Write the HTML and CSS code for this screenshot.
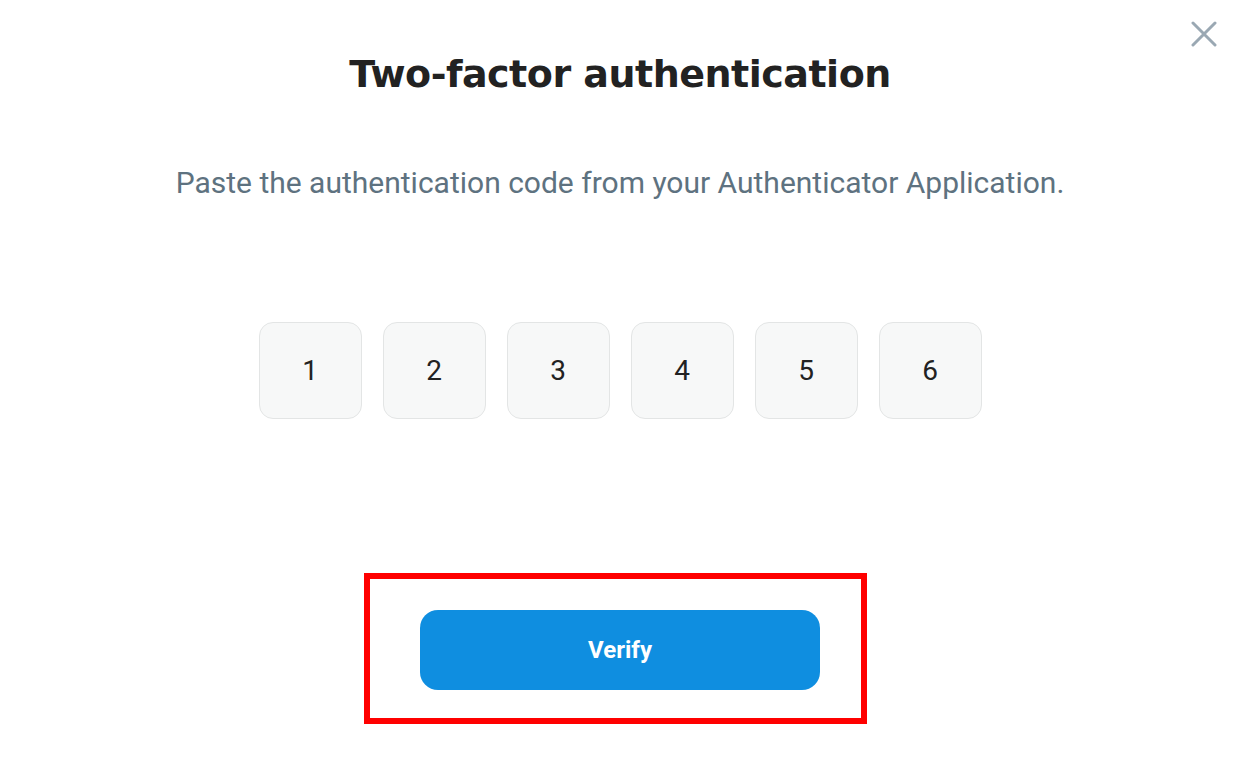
FILE: index.html
```html
<!DOCTYPE html>
<html lang="en">
<head>
<meta charset="utf-8">
<title>Two-factor authentication</title>
<link rel="stylesheet" href="styles.css">
</head>
<body>
<div class="modal">
  <button class="close" aria-label="Close">
    <svg width="26" height="26" viewBox="0 0 26 26"><path d="M2 2 L24 24 M24 2 L2 24" stroke="#9aa8b3" stroke-width="3" stroke-linecap="round" fill="none"/></svg>
  </button>
  <h1 class="title">Two-factor authentication</h1>
  <p class="subtitle">Paste the authentication code from your Authenticator Application.</p>
  <div class="code">
    <div class="digit">1</div>
    <div class="digit">2</div>
    <div class="digit">3</div>
    <div class="digit">4</div>
    <div class="digit">5</div>
    <div class="digit">6</div>
  </div>
  <div class="actions">
    <button class="verify">Verify</button>
    <div class="highlight"></div>
  </div>
</div>
</body>
</html>
```

FILE: styles.css
```css
html, body {
  margin: 0;
  padding: 0;
  background: #ffffff;
}
.modal {
  position: relative;
  width: 1236px;
  height: 764px;
  box-sizing: border-box;
  padding-left: 4px;
  display: flex;
  flex-direction: column;
  align-items: center;
  font-family: Roboto, "Liberation Sans", sans-serif;
}
.close {
  position: absolute;
  top: 21px;
  right: 19px;
  width: 26px;
  height: 26px;
  padding: 0;
  border: 0;
  background: none;
}
.close svg { display: block; }
.title {
  margin: 48px 0 0;
  font-family: "DejaVu Sans", sans-serif;
  font-weight: bold;
  font-size: 38px;
  line-height: 52px;
  color: #222222;
  letter-spacing: -0.5px;
}
.subtitle {
  margin: 65px 0 0;
  font-size: 30px;
  line-height: 36px;
  color: #5e7280;
}
.code {
  margin-top: 121px;
  display: flex;
  gap: 21px;
}
.digit {
  width: 101px;
  height: 95px;
  border: 1px solid #e3e5e5;
  border-radius: 14px;
  background: #f7f8f8;
  display: flex;
  align-items: center;
  justify-content: center;
  font-size: 28px;
  color: #222222;
}
.actions {
  position: relative;
  margin-top: 191px;
}
.verify {
  display: block;
  width: 400px;
  height: 80px;
  border: 0;
  border-radius: 18px;
  background: #0f8ee0;
  color: #ffffff;
  font-family: Roboto, "Liberation Sans", sans-serif;
  font-weight: bold;
  font-size: 24px;
}
.highlight {
  position: absolute;
  left: -56px;
  top: -37px;
  width: 491px;
  height: 139px;
  border: 6px solid #ff0000;
  pointer-events: none;
}
```
